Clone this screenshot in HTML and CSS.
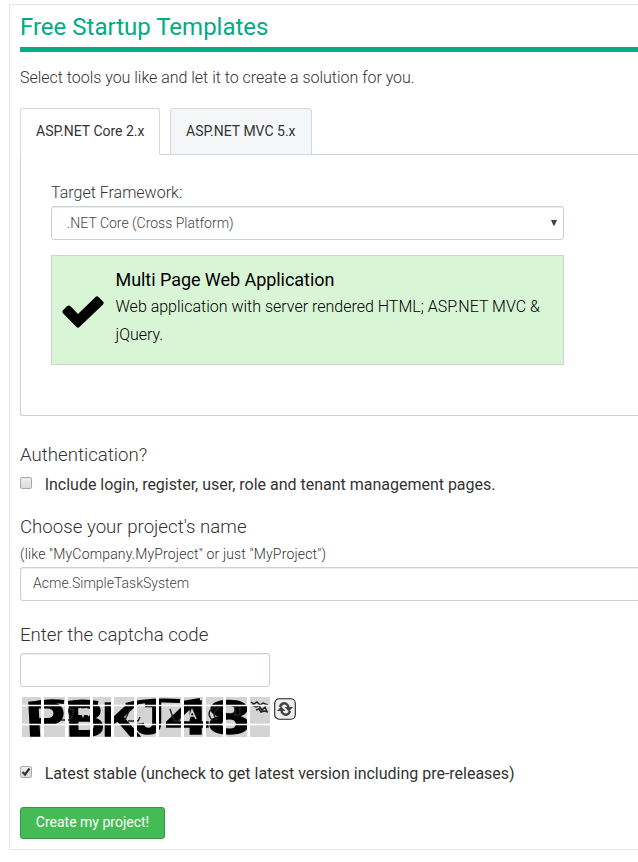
FILE: index.html
```html
<!DOCTYPE html>
<html lang="en">
<head>
<meta charset="utf-8">
<title>Free Startup Templates</title>
<link rel="stylesheet" href="styles.css">
</head>
<body>
<main class="panel">
  <h1 class="title">Free Startup Templates</h1>
  <p class="intro">Select tools you like and let it to create a solution for you.</p>
  <nav class="tabs">
    <a class="tab active">ASP.NET Core 2.x</a>
    <a class="tab mvc">ASP.NET MVC 5.x</a>
  </nav>
  <section class="tab-content">
    <label class="framework-label">Target Framework:</label>
    <div class="control select"><span>.NET Core (Cross Platform)</span>
      <svg width="6" height="6" viewBox="0 0 6 6"><path d="M0 0h6L3.6 5.6H2.4z" fill="#444"/></svg>
    </div>
    <div class="choice">
      <svg class="check" width="42" height="32" viewBox="0 0 42 32"><path d="M1 14.3 5.3 10q1.6-1 3 0l7.700 7.900L33.500 1q1.500-1.300 3 0l4.500 4.500q1.300 1.400 0 2.900L17.500 31q-1.500 1.300-3 0L1 17.300q-1.200-1.500 0-3z"/></svg>
      <div>
        <h2 class="choice-title">Multi Page Web Application</h2>
        <p class="choice-text">Web application with server rendered HTML; ASP.NET MVC &amp; jQuery.</p>
      </div>
    </div>
  </section>
  <h3 class="heading auth">Authentication?</h3>
  <label class="check-row"><span class="box"></span><span>Include login, register, user, role and tenant management pages.</span></label>
  <h3 class="heading name">Choose your project's name</h3>
  <p class="hint">(like "MyCompany.MyProject" or just "MyProject")</p>
  <div class="control project">Acme.SimpleTaskSystem</div>
  <h3 class="heading captcha-heading">Enter the captcha code</h3>
  <div class="control code"></div>
  <div class="captcha">
    <svg class="captcha-image" width="248" height="40" viewBox="0 0 248 40">
      <rect width="248" height="40" fill="#d4d4d4"/>
      <g class="letters">
        <text x="3" y="39" textLength="39" lengthAdjust="spacingAndGlyphs" transform="skewX(3)">P</text>
        <text x="44" y="39" textLength="38" lengthAdjust="spacingAndGlyphs" transform="skewX(1)">B</text>
        <text x="80" y="39" textLength="38" lengthAdjust="spacingAndGlyphs">K</text>
        <text x="113" y="37" textLength="29" lengthAdjust="spacingAndGlyphs">J</text>
        <text x="144" y="37" textLength="42" lengthAdjust="spacingAndGlyphs">4</text>
        <text x="186" y="37" textLength="42" lengthAdjust="spacingAndGlyphs">8</text>
      </g>
      <path class="smear" d="M8 7Q24 3 42 5M46 6Q60 3 76 6M104 8Q124 2 158 4M160 6 178 3"/>
      <path class="scribble light" d="M58 11l3 8 2-6 4 6M64 11l4 7M122 14v8h6M123 18h4M167 22l3-9 4 9M168 19h5"/>
      <path class="scribble" d="M39 23h9l4-10-5-1-3 10M103 23l5-11M106 24h10l2-4M148 12l4 12h5l4-12M194 9q-12 6-3 15M198 10q-10 6-3 13M213 9v9h5V9"/>
      <path class="scribble" d="M229 5l3 2 3-2 3 3 3-2 5 2M230 8l4 2 3-1 3 4 3-3 2 5M234 13l3-1 2 3 3-1 4 1"/>
      <path class="grid" d="M20.500 0v40M44.500 0v40M69.500 0v40M90.500 0v40M113.500 0v40M135.500 0v40M160.500 0v40M182.500 0v40M202.500 0v40M226.500 0v40"/>
      <path class="grid rows" d="M0 8.500h248M0 27.500h248"/>
    </svg>
    <svg class="refresh" width="22" height="22" viewBox="0 0 22 22"><rect x=".7" y=".7" width="20.600" height="20.600" rx="4.500" fill="#eee" stroke="#222" stroke-width="1.100"/><path d="M6 9C7 5 11 4.500 13 6.500Q14.500 7.500 14.500 10M16 13C15 17 11 17.500 9 15.500Q7.500 14.500 7.500 12" fill="none" stroke="#444" stroke-width="2.400"/><path d="M10.500 9h8.500l-4.200 4.500zM3 13h8.500L7.200 8.500z" fill="#444"/></svg>
  </div>
  <label class="check-row latest"><span class="box"><svg width="12" height="12" viewBox="0 0 12 12"><path d="M2.500 6 5 8.500 9.500 2.500" fill="none" stroke="#333" stroke-width="2.200"/></svg></span><span>Latest stable (uncheck to get latest version including pre-releases)</span></label>
  <button class="create">Create my project!</button>
</main>
</body>
</html>
```
FILE: styles.css
```css
* { box-sizing: border-box; }
body { margin: 0; height: 862px; overflow: hidden; background: #fff; color: #333; font-family: Roboto, sans-serif; font-weight: 300; }
h1, h2, h3, p { margin: 0; font-weight: 300; }
svg { display: block; flex: none; }
.panel { margin: 4px 0 0 9px; height: 846px; border: 1px solid #e7e7e7; border-right: 0; padding: 0 0 0 10px; }
.title { height: 47px; border-bottom: 5px solid #00ac83; color: #00ac83; font-size: 24px; font-weight: 400; line-height: 44px; }
.intro { margin-top: 11px; font-size: 16px; line-height: 30px; letter-spacing: -.02px; }
.tabs { display: flex; gap: 10px; margin-top: 15px; height: 47px; }
.tab { width: 140px; height: 47px; border: 1px solid #d5d8dc; border-radius: 3px 3px 0 0; padding-left: 15px; font-size: 14px; font-weight: 400; line-height: 45px; background: #f5f6f8; white-space: nowrap; }
.tab.active { background: #fff; border-bottom-color: #fff; position: relative; }
.tab.mvc { width: 142px; }
.tab-content { margin-top: -1px; height: 262px; border: 1px solid #c8d1de; border-right: 0; border-radius: 0 0 0 3px; padding: 23px 30px; }
.framework-label { display: block; height: 28px; font-size: 16px; line-height: 30px; }
.control { height: 34px; border: 1px solid #c8d1de; border-radius: 3px; box-shadow: inset 0 1px 1px rgba(0,0,0,.075); padding: 0 12px; font-size: 14px; line-height: 31px; color: #444; }
.project { border-right: 0; border-radius: 3px 0 0 3px; }
.select { display: flex; justify-content: space-between; align-items: center; width: 513px; padding: 0 6px 0 15px; }
.choice { display: flex; gap: 11.500px; width: 513px; height: 110px; margin-top: 15px; padding: 10px 10px 0 10px; border: 1px solid #ccd5cc; background: #d8f5d6; color: #000; }
.check { margin-top: 30px; }
.choice-title { height: 27px; font-size: 18px; font-weight: 400; line-height: 28px; letter-spacing: -.05px; }
.choice-text { font-size: 16px; line-height: 28px; }
.heading { font-size: 18.670px; line-height: 26px; }
.auth { margin-top: 26px; }
.check-row { display: flex; gap: 12.700px; height: 24px; margin-top: 5px; font-size: 16px; font-weight: 400; line-height: 24px; letter-spacing: -.01px; white-space: nowrap; }
.box { width: 12px; height: 12px; margin-top: 4px; border: 1px solid #aaa; border-radius: 2px; background: linear-gradient(#eee, #dcdcdc); }
.box svg { margin: -1px; }
.name { margin-top: 17px; }
.hint { height: 27px; font-size: 14px; line-height: 28px; letter-spacing: .16px; }
.captcha-heading { margin-top: 21px; }
.code { width: 250px; margin-top: 5px; }
.captcha { display: flex; gap: 4px; height: 40px; margin: 10px 0 0 2px; }
.captcha-image { overflow: visible; }
.letters { font: bold 49px "Liberation Sans", sans-serif; stroke: #000; stroke-width: 1.5px; }
.smear { fill: none; stroke: #000; stroke-width: 4px; }
.scribble { fill: none; stroke: #222; stroke-width: 1.5px; }
.light { stroke: #d4d4d4; }
.grid { fill: none; stroke: #fff; stroke-width: 3px; }
.rows { stroke-width: 1.5px; }
.refresh { margin-top: 1px; }
.latest { margin-top: 25px; }
.create { display: block; margin-top: 21px; width: 145px; height: 32px; border: 1px solid #319744; border-radius: 3px; background: #44bb55; color: #fff; font: 400 14px Roboto, sans-serif; padding: 0 0 2px; }
```
